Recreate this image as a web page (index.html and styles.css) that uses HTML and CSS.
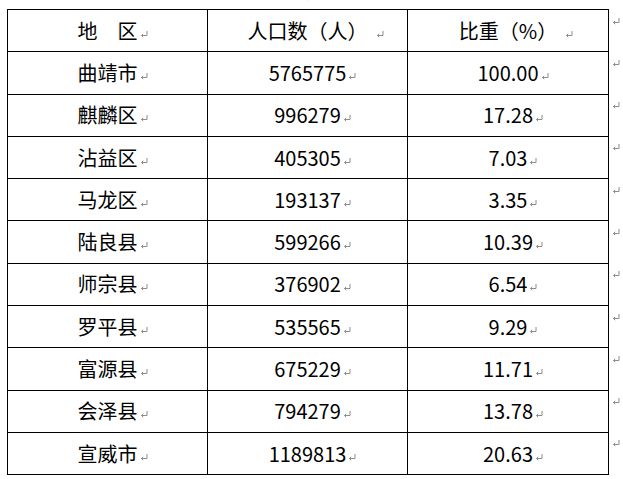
FILE: index.html
```html
<!DOCTYPE html>
<html lang="zh">
<head>
<meta charset="utf-8">
<link rel="stylesheet" href="styles.css">
</head>
<body>
<div class="top"><span class="topmark"><svg class="pm" width="8" height="7" viewBox="0 0 8 7"><path d="M7 0V4.5H1.5M3.2 2.8L1.5 4.5L3.2 6.2" fill="none" stroke="#8c8c8c" stroke-width="1"/></svg></span></div>
<table class="tbl">
<colgroup><col class="w1"><col class="w2"><col class="w3"><col class="w4"></colgroup>
<tbody>
<tr><td class="c">地　区<span class="m"><svg width="8" height="7" viewBox="0 0 8 7"><path d="M7 0V4.5H1.5M3.2 2.8L1.5 4.5L3.2 6.2" fill="none" stroke="#8c8c8c" stroke-width="1"/></svg></span></td><td class="c">人口数（人）<span class="m mh"><svg width="8" height="7" viewBox="0 0 8 7"><path d="M7 0V4.5H1.5M3.2 2.8L1.5 4.5L3.2 6.2" fill="none" stroke="#8c8c8c" stroke-width="1"/></svg></span></td><td class="c">比重（%）<span class="m mh"><svg width="8" height="7" viewBox="0 0 8 7"><path d="M7 0V4.5H1.5M3.2 2.8L1.5 4.5L3.2 6.2" fill="none" stroke="#8c8c8c" stroke-width="1"/></svg></span></td><td class="e"><svg width="8" height="7" viewBox="0 0 8 7"><path d="M7 0V4.5H1.5M3.2 2.8L1.5 4.5L3.2 6.2" fill="none" stroke="#8c8c8c" stroke-width="1"/></svg></td></tr>
<tr><td class="c">曲靖市<span class="m"><svg width="8" height="7" viewBox="0 0 8 7"><path d="M7 0V4.5H1.5M3.2 2.8L1.5 4.5L3.2 6.2" fill="none" stroke="#8c8c8c" stroke-width="1"/></svg></span></td><td class="c">5765775<span class="m"><svg width="8" height="7" viewBox="0 0 8 7"><path d="M7 0V4.5H1.5M3.2 2.8L1.5 4.5L3.2 6.2" fill="none" stroke="#8c8c8c" stroke-width="1"/></svg></span></td><td class="c">100.00<span class="m"><svg width="8" height="7" viewBox="0 0 8 7"><path d="M7 0V4.5H1.5M3.2 2.8L1.5 4.5L3.2 6.2" fill="none" stroke="#8c8c8c" stroke-width="1"/></svg></span></td><td class="e"><svg width="8" height="7" viewBox="0 0 8 7"><path d="M7 0V4.5H1.5M3.2 2.8L1.5 4.5L3.2 6.2" fill="none" stroke="#8c8c8c" stroke-width="1"/></svg></td></tr>
<tr><td class="c">麒麟区<span class="m"><svg width="8" height="7" viewBox="0 0 8 7"><path d="M7 0V4.5H1.5M3.2 2.8L1.5 4.5L3.2 6.2" fill="none" stroke="#8c8c8c" stroke-width="1"/></svg></span></td><td class="c">996279<span class="m"><svg width="8" height="7" viewBox="0 0 8 7"><path d="M7 0V4.5H1.5M3.2 2.8L1.5 4.5L3.2 6.2" fill="none" stroke="#8c8c8c" stroke-width="1"/></svg></span></td><td class="c">17.28<span class="m"><svg width="8" height="7" viewBox="0 0 8 7"><path d="M7 0V4.5H1.5M3.2 2.8L1.5 4.5L3.2 6.2" fill="none" stroke="#8c8c8c" stroke-width="1"/></svg></span></td><td class="e"><svg width="8" height="7" viewBox="0 0 8 7"><path d="M7 0V4.5H1.5M3.2 2.8L1.5 4.5L3.2 6.2" fill="none" stroke="#8c8c8c" stroke-width="1"/></svg></td></tr>
<tr><td class="c">沾益区<span class="m"><svg width="8" height="7" viewBox="0 0 8 7"><path d="M7 0V4.5H1.5M3.2 2.8L1.5 4.5L3.2 6.2" fill="none" stroke="#8c8c8c" stroke-width="1"/></svg></span></td><td class="c">405305<span class="m"><svg width="8" height="7" viewBox="0 0 8 7"><path d="M7 0V4.5H1.5M3.2 2.8L1.5 4.5L3.2 6.2" fill="none" stroke="#8c8c8c" stroke-width="1"/></svg></span></td><td class="c">7.03<span class="m"><svg width="8" height="7" viewBox="0 0 8 7"><path d="M7 0V4.5H1.5M3.2 2.8L1.5 4.5L3.2 6.2" fill="none" stroke="#8c8c8c" stroke-width="1"/></svg></span></td><td class="e"><svg width="8" height="7" viewBox="0 0 8 7"><path d="M7 0V4.5H1.5M3.2 2.8L1.5 4.5L3.2 6.2" fill="none" stroke="#8c8c8c" stroke-width="1"/></svg></td></tr>
<tr><td class="c">马龙区<span class="m"><svg width="8" height="7" viewBox="0 0 8 7"><path d="M7 0V4.5H1.5M3.2 2.8L1.5 4.5L3.2 6.2" fill="none" stroke="#8c8c8c" stroke-width="1"/></svg></span></td><td class="c">193137<span class="m"><svg width="8" height="7" viewBox="0 0 8 7"><path d="M7 0V4.5H1.5M3.2 2.8L1.5 4.5L3.2 6.2" fill="none" stroke="#8c8c8c" stroke-width="1"/></svg></span></td><td class="c">3.35<span class="m"><svg width="8" height="7" viewBox="0 0 8 7"><path d="M7 0V4.5H1.5M3.2 2.8L1.5 4.5L3.2 6.2" fill="none" stroke="#8c8c8c" stroke-width="1"/></svg></span></td><td class="e"><svg width="8" height="7" viewBox="0 0 8 7"><path d="M7 0V4.5H1.5M3.2 2.8L1.5 4.5L3.2 6.2" fill="none" stroke="#8c8c8c" stroke-width="1"/></svg></td></tr>
<tr><td class="c">陆良县<span class="m"><svg width="8" height="7" viewBox="0 0 8 7"><path d="M7 0V4.5H1.5M3.2 2.8L1.5 4.5L3.2 6.2" fill="none" stroke="#8c8c8c" stroke-width="1"/></svg></span></td><td class="c">599266<span class="m"><svg width="8" height="7" viewBox="0 0 8 7"><path d="M7 0V4.5H1.5M3.2 2.8L1.5 4.5L3.2 6.2" fill="none" stroke="#8c8c8c" stroke-width="1"/></svg></span></td><td class="c">10.39<span class="m"><svg width="8" height="7" viewBox="0 0 8 7"><path d="M7 0V4.5H1.5M3.2 2.8L1.5 4.5L3.2 6.2" fill="none" stroke="#8c8c8c" stroke-width="1"/></svg></span></td><td class="e"><svg width="8" height="7" viewBox="0 0 8 7"><path d="M7 0V4.5H1.5M3.2 2.8L1.5 4.5L3.2 6.2" fill="none" stroke="#8c8c8c" stroke-width="1"/></svg></td></tr>
<tr><td class="c">师宗县<span class="m"><svg width="8" height="7" viewBox="0 0 8 7"><path d="M7 0V4.5H1.5M3.2 2.8L1.5 4.5L3.2 6.2" fill="none" stroke="#8c8c8c" stroke-width="1"/></svg></span></td><td class="c">376902<span class="m"><svg width="8" height="7" viewBox="0 0 8 7"><path d="M7 0V4.5H1.5M3.2 2.8L1.5 4.5L3.2 6.2" fill="none" stroke="#8c8c8c" stroke-width="1"/></svg></span></td><td class="c">6.54<span class="m"><svg width="8" height="7" viewBox="0 0 8 7"><path d="M7 0V4.5H1.5M3.2 2.8L1.5 4.5L3.2 6.2" fill="none" stroke="#8c8c8c" stroke-width="1"/></svg></span></td><td class="e"><svg width="8" height="7" viewBox="0 0 8 7"><path d="M7 0V4.5H1.5M3.2 2.8L1.5 4.5L3.2 6.2" fill="none" stroke="#8c8c8c" stroke-width="1"/></svg></td></tr>
<tr><td class="c">罗平县<span class="m"><svg width="8" height="7" viewBox="0 0 8 7"><path d="M7 0V4.5H1.5M3.2 2.8L1.5 4.5L3.2 6.2" fill="none" stroke="#8c8c8c" stroke-width="1"/></svg></span></td><td class="c">535565<span class="m"><svg width="8" height="7" viewBox="0 0 8 7"><path d="M7 0V4.5H1.5M3.2 2.8L1.5 4.5L3.2 6.2" fill="none" stroke="#8c8c8c" stroke-width="1"/></svg></span></td><td class="c">9.29<span class="m"><svg width="8" height="7" viewBox="0 0 8 7"><path d="M7 0V4.5H1.5M3.2 2.8L1.5 4.5L3.2 6.2" fill="none" stroke="#8c8c8c" stroke-width="1"/></svg></span></td><td class="e"><svg width="8" height="7" viewBox="0 0 8 7"><path d="M7 0V4.5H1.5M3.2 2.8L1.5 4.5L3.2 6.2" fill="none" stroke="#8c8c8c" stroke-width="1"/></svg></td></tr>
<tr><td class="c">富源县<span class="m"><svg width="8" height="7" viewBox="0 0 8 7"><path d="M7 0V4.5H1.5M3.2 2.8L1.5 4.5L3.2 6.2" fill="none" stroke="#8c8c8c" stroke-width="1"/></svg></span></td><td class="c">675229<span class="m"><svg width="8" height="7" viewBox="0 0 8 7"><path d="M7 0V4.5H1.5M3.2 2.8L1.5 4.5L3.2 6.2" fill="none" stroke="#8c8c8c" stroke-width="1"/></svg></span></td><td class="c">11.71<span class="m"><svg width="8" height="7" viewBox="0 0 8 7"><path d="M7 0V4.5H1.5M3.2 2.8L1.5 4.5L3.2 6.2" fill="none" stroke="#8c8c8c" stroke-width="1"/></svg></span></td><td class="e"><svg width="8" height="7" viewBox="0 0 8 7"><path d="M7 0V4.5H1.5M3.2 2.8L1.5 4.5L3.2 6.2" fill="none" stroke="#8c8c8c" stroke-width="1"/></svg></td></tr>
<tr><td class="c">会泽县<span class="m"><svg width="8" height="7" viewBox="0 0 8 7"><path d="M7 0V4.5H1.5M3.2 2.8L1.5 4.5L3.2 6.2" fill="none" stroke="#8c8c8c" stroke-width="1"/></svg></span></td><td class="c">794279<span class="m"><svg width="8" height="7" viewBox="0 0 8 7"><path d="M7 0V4.5H1.5M3.2 2.8L1.5 4.5L3.2 6.2" fill="none" stroke="#8c8c8c" stroke-width="1"/></svg></span></td><td class="c">13.78<span class="m"><svg width="8" height="7" viewBox="0 0 8 7"><path d="M7 0V4.5H1.5M3.2 2.8L1.5 4.5L3.2 6.2" fill="none" stroke="#8c8c8c" stroke-width="1"/></svg></span></td><td class="e"><svg width="8" height="7" viewBox="0 0 8 7"><path d="M7 0V4.5H1.5M3.2 2.8L1.5 4.5L3.2 6.2" fill="none" stroke="#8c8c8c" stroke-width="1"/></svg></td></tr>
<tr><td class="c">宣威市<span class="m"><svg width="8" height="7" viewBox="0 0 8 7"><path d="M7 0V4.5H1.5M3.2 2.8L1.5 4.5L3.2 6.2" fill="none" stroke="#8c8c8c" stroke-width="1"/></svg></span></td><td class="c">1189813<span class="m"><svg width="8" height="7" viewBox="0 0 8 7"><path d="M7 0V4.5H1.5M3.2 2.8L1.5 4.5L3.2 6.2" fill="none" stroke="#8c8c8c" stroke-width="1"/></svg></span></td><td class="c">20.63<span class="m"><svg width="8" height="7" viewBox="0 0 8 7"><path d="M7 0V4.5H1.5M3.2 2.8L1.5 4.5L3.2 6.2" fill="none" stroke="#8c8c8c" stroke-width="1"/></svg></span></td><td class="e"><svg width="8" height="7" viewBox="0 0 8 7"><path d="M7 0V4.5H1.5M3.2 2.8L1.5 4.5L3.2 6.2" fill="none" stroke="#8c8c8c" stroke-width="1"/></svg></td></tr>
</tbody>
</table>
</body>
</html>
```
FILE: styles.css
```css
html, body {
  margin: 0;
  padding: 0;
  background: #fff;
}
body {
  font-family: "Noto Sans CJK SC", "Noto Sans", sans-serif;
  color: #000;
  width: 623px;
  height: 479px;
  overflow: hidden;
}
.top {
  height: 9px;
  overflow: hidden;
  padding-left: 305px;
}
.topmark {
  display: block;
  margin-top: -6px;
  height: 7px;
}
.topmark svg { display: block; }
.tbl {
  border-collapse: collapse;
  table-layout: fixed;
  margin-left: 7px;
  width: 616px;
}
.w1 { width: 200px; }
.w2 { width: 200px; }
.w3 { width: 201px; }
.w4 { width: 15px; }
.tbl td {
  padding: 0;
  height: 41.3px;
}
.c {
  border: 1px solid #000;
  text-align: center;
  vertical-align: middle;
  font-size: 20px;
  line-height: 24px;
  white-space: nowrap;
}
.m {
  display: inline-block;
  width: 0;
  overflow: visible;
  vertical-align: baseline;
}
.m svg {
  display: block;
  margin-left: 2px;
  position: relative;
  top: -1px;
}
.mh svg { margin-left: 8px; }
.e {
  vertical-align: top;
  line-height: 0;
}
.e svg {
  display: block;
  margin: 8px 0 0 3px;
}
```
